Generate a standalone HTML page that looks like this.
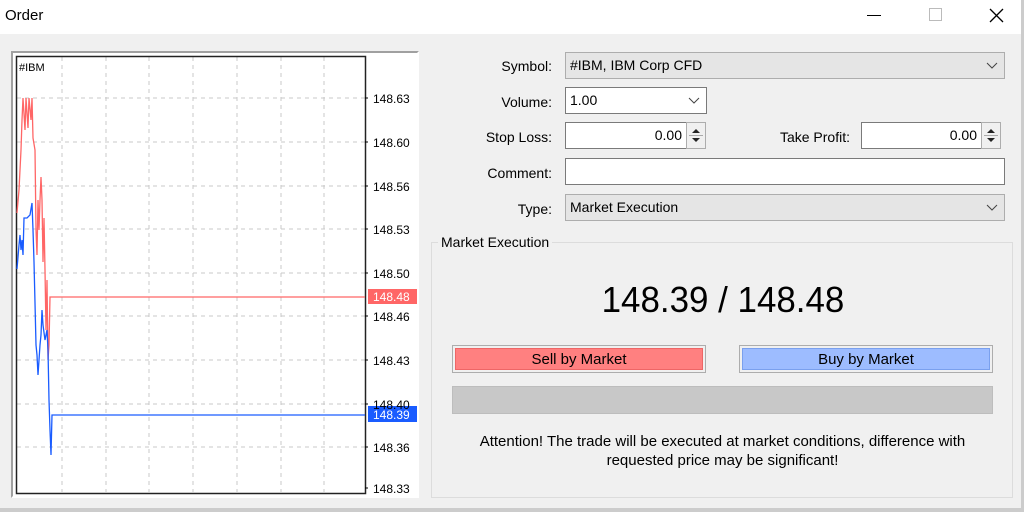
<!DOCTYPE html>
<html><head><style>
*{margin:0;padding:0;box-sizing:border-box}
body{width:1024px;height:512px;background:#f0f0f0;font-family:"Liberation Sans",sans-serif;font-size:14px;color:#000;position:relative;overflow:hidden}
.a{position:absolute}
.lbl{position:absolute;text-align:right;font-size:14px}
.box{position:absolute;border:1px solid #7a7a7a;background:#fff;font-size:14px;padding:4px 4px;height:27px}
.combo{background:#e5e5e5;border-color:#adadad}
.chev{position:absolute;right:6px;top:6px}
.spin{position:absolute;border:1px solid #adadad;background:#f0f0f0;width:20px;height:27px}
</style></head><body>
<div class="a" style="left:0;top:0;width:1024px;height:34px;background:#fff"></div>
<div class="a" style="left:5px;top:7px;font-size:15px">Order</div>
<div class="a" style="left:867px;top:15px;width:14px;height:1px;background:#000"></div>
<div class="a" style="left:929px;top:8px;width:13px;height:13px;border:1px solid #bbb"></div>
<svg class="a" style="left:989px;top:8px" width="15" height="15"><path d="M1 1L14 14M14 1L1 14" stroke="#000" stroke-width="1.3"/></svg>
<div class="a" style="left:1021px;top:0;width:3px;height:512px;background:#ccc"></div>
<div class="a" style="left:0;top:508px;width:1024px;height:4px;background:#ccc"></div>

<div class="a" style="left:11px;top:51px;width:408px;height:447px;background:#fff;border:2px solid #a0a0a0;border-right-color:#fff;border-bottom-color:#fff"></div>
<svg class="a" style="left:0;top:0" width="430" height="512">
<g stroke="#c8c8c8" stroke-dasharray="4,4" stroke-width="1">
<path d="M62 57V492M106 57V492M149 57V492M193 57V492M237 57V492M281 57V492M324 57V492"/>
<path d="M17 98H365M17 142H365M17 186H365M17 229H365M17 273H365M17 316H365M17 360H365M17 404H365M17 447H365"/>
</g>
<rect x="16.5" y="56.5" width="349" height="437" fill="none" stroke="#222" stroke-width="1.5"/>
<polyline fill="none" stroke="#f66" stroke-width="1.3" points="17,213 19,190 21,150 22,120 23,98 25,130 26,98 28,128 29,98 31,120 32,98 33,138 35,150 36,230 37,255 38,200 39,230 40,200 41,177 42,200 43,262 44,218 45,270 46,330 47,280 48,360 49,345 50,297 365,297"/>
<polyline fill="none" stroke="#1a5cff" stroke-width="1.3" points="17,269 19,245 20,235 21,250 22,240 23,255 24,218 27,218 30,215 32,203 33,230 34,262 35,303 36,345 37,355 38,375 39,360 40,345 41,335 42,310 43,325 45,340 47,330 48,350 49,400 50,430 51,455 52,415 365,415"/>
<rect x="368" y="289" width="49" height="15" fill="#f66"/>
<rect x="368" y="406" width="49" height="16" fill="#1a5cff"/>
<g font-family="Liberation Sans" font-size="12" fill="#000">
<text x="19" y="71" font-size="11">#IBM</text>
<text x="373" y="103">148.63</text><text x="373" y="147">148.60</text><text x="373" y="191">148.56</text><text x="373" y="234">148.53</text><text x="373" y="278">148.50</text><text x="373" y="321">148.46</text><text x="373" y="365">148.43</text><text x="373" y="409">148.40</text><text x="373" y="452">148.36</text><text x="373" y="493">148.33</text>
<text x="373" y="301" fill="#fff">148.48</text><text x="373" y="419" fill="#fff">148.39</text>
</g>
<path d="M365 98h3M365 142h3M365 186h3M365 229h3M365 273h3M365 316h3M365 360h3M365 404h3M365 447h3M365 488h3" stroke="#000"/>
</svg>

<div class="lbl" style="left:450px;width:102px;top:58px">Symbol:</div>
<div class="box combo" style="left:565px;top:52px;width:440px">#IBM, IBM Corp CFD<svg class="chev" width="12" height="12"><path d="M1 4l5 5 5-5" fill="none" stroke="#444"/></svg></div>
<div class="lbl" style="left:450px;width:102px;top:94px">Volume:</div>
<div class="box" style="left:565px;top:87px;width:142px">1.00<svg class="chev" width="12" height="12"><path d="M1 4l5 5 5-5" fill="none" stroke="#444"/></svg></div>
<div class="lbl" style="left:450px;width:102px;top:129px">Stop Loss:</div>
<div class="box" style="left:565px;top:122px;width:122px;text-align:right">0.00</div>
<div class="spin" style="left:686px;top:122px"><svg width="18" height="25"><path d="M5 10l4-4 4 4zM5 15l4 4 4-4z" fill="#222"/><path d="M2 12.5h14" stroke="#aaa"/></svg></div>
<div class="lbl" style="left:740px;width:110px;top:129px">Take Profit:</div>
<div class="box" style="left:861px;top:122px;width:121px;text-align:right">0.00</div>
<div class="spin" style="left:981px;top:122px"><svg width="18" height="25"><path d="M5 10l4-4 4 4zM5 15l4 4 4-4z" fill="#222"/><path d="M2 12.5h14" stroke="#aaa"/></svg></div>
<div class="lbl" style="left:450px;width:102px;top:165px">Comment:</div>
<div class="box" style="left:565px;top:158px;width:440px"></div>
<div class="lbl" style="left:450px;width:102px;top:201px">Type:</div>
<div class="box combo" style="left:565px;top:194px;width:440px">Market Execution<svg class="chev" width="12" height="12"><path d="M1 4l5 5 5-5" fill="none" stroke="#444"/></svg></div>

<div class="a" style="left:431px;top:242px;width:582px;height:256px;border:1px solid #dcdcdc"></div>
<div class="a" style="left:438px;top:234px;background:#f0f0f0;padding:0 3px">Market Execution</div>
<div class="a" style="left:430px;top:279px;width:586px;text-align:center;font-size:36px;transform:scaleX(0.97)">148.39 / 148.48</div>
<div class="a" style="left:452px;top:345px;width:254px;height:28px;border:1px solid #adadad;padding:2px"><div style="background:#ff8080;height:100%;border:1px solid #e66;text-align:center;line-height:21px;font-size:15px">Sell by Market</div></div>
<div class="a" style="left:739px;top:345px;width:254px;height:28px;border:1px solid #adadad;padding:2px"><div style="background:#9dbcff;height:100%;border:1px solid #7aa0ee;text-align:center;line-height:21px;font-size:15px">Buy by Market</div></div>
<div class="a" style="left:452px;top:386px;width:541px;height:28px;background:#c8c8c8;border:1px solid #bdbdbd"></div>
<div class="a" style="left:430px;top:432px;width:585px;text-align:center;line-height:19px;font-size:15px">Attention! The trade will be executed at market conditions, difference with<br>requested price may be significant!</div>
</body></html>
